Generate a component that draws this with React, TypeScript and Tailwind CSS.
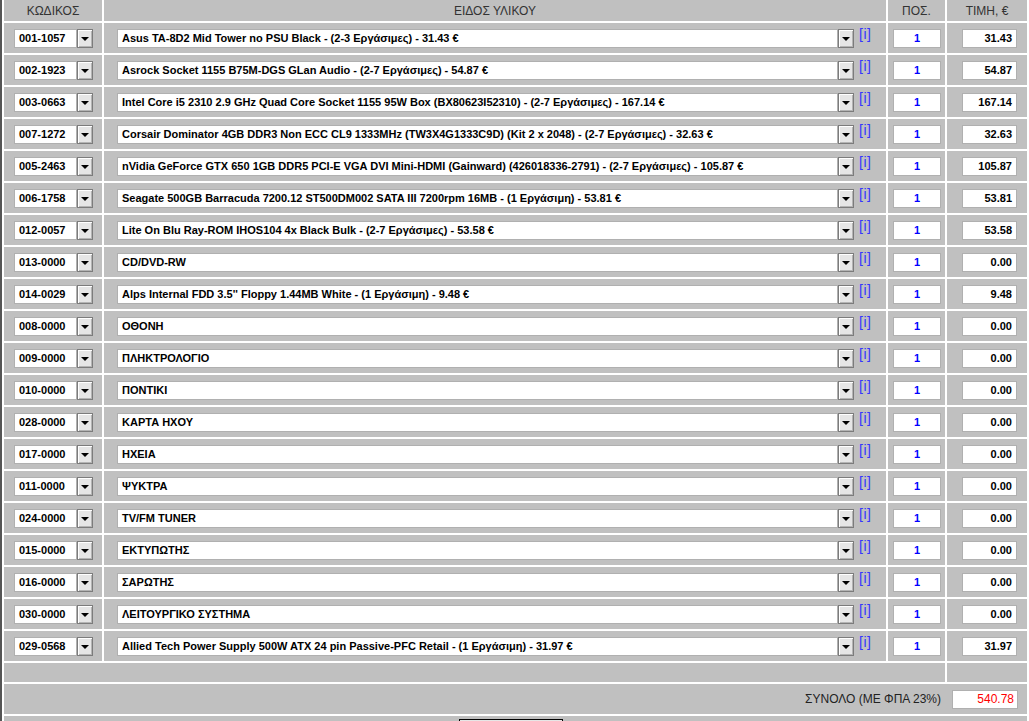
import React from 'react';

type Row = { code: string; name: string; price: string };

const rows: Row[] = [
  { code: '001-1057', name: 'Asus TA-8D2 Mid Tower no PSU Black - (2-3 Εργάσιμες) - 31.43 €', price: '31.43' },
  { code: '002-1923', name: 'Asrock Socket 1155 B75M-DGS GLan Audio - (2-7 Εργάσιμες) - 54.87 €', price: '54.87' },
  { code: '003-0663', name: 'Intel Core i5 2310 2.9 GHz Quad Core Socket 1155 95W Box (BX80623I52310) - (2-7 Εργάσιμες) - 167.14 €', price: '167.14' },
  { code: '007-1272', name: 'Corsair Dominator 4GB DDR3 Non ECC CL9 1333MHz (TW3X4G1333C9D) (Kit 2 x 2048) - (2-7 Εργάσιμες) - 32.63 €', price: '32.63' },
  { code: '005-2463', name: 'nVidia GeForce GTX 650 1GB DDR5 PCI-E VGA DVI Mini-HDMI (Gainward) (426018336-2791) - (2-7 Εργάσιμες) - 105.87 €', price: '105.87' },
  { code: '006-1758', name: 'Seagate 500GB Barracuda 7200.12 ST500DM002 SATA III 7200rpm 16MB - (1 Εργάσιμη) - 53.81 €', price: '53.81' },
  { code: '012-0057', name: 'Lite On Blu Ray-ROM IHOS104 4x Black Bulk - (2-7 Εργάσιμες) - 53.58 €', price: '53.58' },
  { code: '013-0000', name: 'CD/DVD-RW', price: '0.00' },
  { code: '014-0029', name: "Alps Internal FDD 3.5'' Floppy 1.44MB White - (1 Εργάσιμη) - 9.48 €", price: '9.48' },
  { code: '008-0000', name: 'ΟΘΟΝΗ', price: '0.00' },
  { code: '009-0000', name: 'ΠΛΗΚΤΡΟΛΟΓΙΟ', price: '0.00' },
  { code: '010-0000', name: 'ΠΟΝΤΙΚΙ', price: '0.00' },
  { code: '028-0000', name: 'ΚΑΡΤΑ ΗΧΟΥ', price: '0.00' },
  { code: '017-0000', name: 'ΗΧΕΙΑ', price: '0.00' },
  { code: '011-0000', name: 'ΨΥΚΤΡΑ', price: '0.00' },
  { code: '024-0000', name: 'TV/FM TUNER', price: '0.00' },
  { code: '015-0000', name: 'ΕΚΤΥΠΩΤΗΣ', price: '0.00' },
  { code: '016-0000', name: 'ΣΑΡΩΤΗΣ', price: '0.00' },
  { code: '030-0000', name: 'ΛΕΙΤΟΥΡΓΙΚΟ ΣΥΣΤΗΜΑ', price: '0.00' },
  { code: '029-0568', name: 'Allied Tech Power Supply 500W ATX 24 pin Passive-PFC Retail - (1 Εργάσιμη) - 31.97 €', price: '31.97' },
];

const DropButton: React.FC = () => (
  <div className="w-[16px] h-[19px] shrink-0 bg-[#e6e6e6] border border-[#7c7c7c] shadow-[inset_1px_1px_0_#ffffff,inset_-1px_-1px_0_#b4b4b4] flex items-center justify-center">
    <div className="w-0 h-0 border-l-[4px] border-r-[4px] border-t-[4px] border-l-transparent border-r-transparent border-t-black mt-[1px]" />
  </div>
);

const cell = 'bg-[#c0c0c0]';

export default function App() {
  return (
    <div className="w-[1029px] h-[721px] overflow-hidden bg-white border-l-2 border-[#555555] pl-[2px] pr-[2px] text-[12px] font-['Liberation_Sans',Arial,sans-serif]">
      <div className="grid grid-cols-[98px_782px_57px_80px] gap-[2px]">
        {/* header */}
        <div className={`${cell} h-[21px] flex items-center justify-center text-[#333]`}>ΚΩΔΙΚΟΣ</div>
        <div className={`${cell} h-[21px] flex items-center justify-center text-[#333]`}>ΕΙΔΟΣ ΥΛΙΚΟΥ</div>
        <div className={`${cell} h-[21px] flex items-center justify-center text-[#333]`}>ΠΟΣ.</div>
        <div className={`${cell} h-[21px] flex items-center justify-center text-[#333]`}>ΤΙΜΗ, €</div>

        {rows.map(r => (
          <React.Fragment key={r.code}>
            <div className={`${cell} h-[30px] flex items-center pl-[10px]`}>
              <div className="w-[63px] h-[19px] bg-white border border-[#b0b0b0] flex items-center pl-[4px] pt-[1px] text-[11px] font-bold text-black">{r.code}</div>
              <DropButton />
            </div>
            <div className={`${cell} h-[30px] flex items-center pl-[13px]`}>
              <div className="w-[721px] h-[19px] bg-white border border-[#b0b0b0] flex items-center pl-[4px] pt-[1px] text-[11px] font-bold text-black whitespace-nowrap overflow-hidden">{r.name}</div>
              <DropButton />
              <span className="self-start mt-[4px] ml-[5px] text-[14px] leading-[15px] tracking-[0.5px] text-[#3535ff]">[i]</span>
            </div>
            <div className={`${cell} h-[30px] flex items-center pl-[5px]`}>
              <div className="w-[48px] h-[19px] bg-white border border-[#b0b0b0] flex items-center justify-center pt-[1px] text-[11px] font-bold text-[#0000ff]">1</div>
            </div>
            <div className={`${cell} h-[30px] flex items-center pl-[15px]`}>
              <div className="w-[55px] h-[19px] bg-white border border-[#b0b0b0] flex items-center justify-end pr-[4px] pt-[1px] text-[11px] font-bold text-black">{r.price}</div>
            </div>
          </React.Fragment>
        ))}

        {/* empty row */}
        <div className={`${cell} h-[19px] col-span-3`} />
        <div className={`${cell} h-[19px]`} />

        {/* total */}
        <div className={`${cell} h-[30px] col-span-4 flex items-center justify-end pr-[9px]`}>
          <span className="text-[#222] mr-[11px]">ΣΥΝΟΛΟ (ΜΕ ΦΠΑ 23%)</span>
          <div className="w-[66px] h-[19px] bg-white border border-[#b0b0b0] flex items-center justify-end pr-[3px] text-[#ff0000]">540.78</div>
        </div>

        {/* buttons row */}
        <div className={`${cell} h-[30px] col-span-4 pl-[455px] pt-[3px]`}>
          <div className="w-[104px] h-[24px] bg-[#e6e6e6] border border-black" />
        </div>
      </div>
    </div>
  );
}
